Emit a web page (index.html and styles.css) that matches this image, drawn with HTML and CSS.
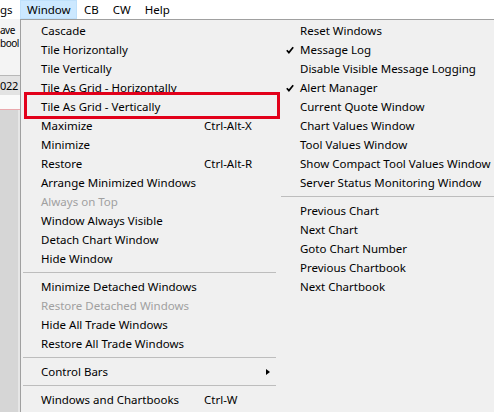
FILE: index.html
```html
<!DOCTYPE html>
<html>
<head>
<meta charset="utf-8">
<link rel="stylesheet" href="styles.css">
</head>
<body>
<div class="menubar">
  <span class="mb-item mb-clip">gs</span>
  <span class="mb-item active">Window</span>
  <span class="mb-item">CB</span>
  <span class="mb-item">CW</span>
  <span class="mb-item">Help</span>
</div>
<div class="workspace">
  <div class="strip">
    <div class="strip-tb">
      <div class="strip-line">ave</div>
      <div class="strip-line">bool</div>
    </div>
    <div class="strip-blank"></div>
    <div class="strip-date">022</div>
    <div class="strip-pink"></div>
    <div class="strip-gray"></div>
  </div>
  <div class="menu">
    <div class="col col-left">
      <div class="item"><span>Cascade</span></div>
      <div class="item"><span>Tile Horizontally</span></div>
      <div class="item"><span>Tile Vertically</span></div>
      <div class="item"><span>Tile As Grid - Horizontally</span></div>
      <div class="item"><span>Tile As Grid - Vertically</span></div>
      <div class="item"><span>Maximize</span><span>Ctrl-Alt-X</span></div>
      <div class="item"><span>Minimize</span></div>
      <div class="item"><span>Restore</span><span>Ctrl-Alt-R</span></div>
      <div class="item"><span>Arrange Minimized Windows</span></div>
      <div class="item disabled"><span>Always on Top</span></div>
      <div class="item"><span>Window Always Visible</span></div>
      <div class="item"><span>Detach Chart Window</span></div>
      <div class="item"><span>Hide Window</span></div>
      <div class="sep"></div>
      <div class="item"><span>Minimize Detached Windows</span></div>
      <div class="item disabled"><span>Restore Detached Windows</span></div>
      <div class="item"><span>Hide All Trade Windows</span></div>
      <div class="item"><span>Restore All Trade Windows</span></div>
      <div class="sep"></div>
      <div class="item sub"><span>Control Bars</span><span class="arrow"></span></div>
      <div class="sep"></div>
      <div class="item"><span>Windows and Chartbooks</span><span>Ctrl-W</span></div>
    </div>
    <div class="col col-right">
      <div class="ritem"><span class="chk"></span><span>Reset Windows</span></div>
      <div class="ritem"><span class="chk"><svg width="8" height="8" viewBox="0 0 8 8"><polyline points="0.8,4.2 2.9,6.6 7.2,1.2" fill="none" stroke="#000" stroke-width="1.7"/></svg></span><span>Message Log</span></div>
      <div class="ritem"><span class="chk"></span><span>Disable Visible Message Logging</span></div>
      <div class="ritem"><span class="chk"><svg width="8" height="8" viewBox="0 0 8 8"><polyline points="0.8,4.2 2.9,6.6 7.2,1.2" fill="none" stroke="#000" stroke-width="1.7"/></svg></span><span>Alert Manager</span></div>
      <div class="ritem"><span class="chk"></span><span>Current Quote Window</span></div>
      <div class="ritem"><span class="chk"></span><span>Chart Values Window</span></div>
      <div class="ritem"><span class="chk"></span><span>Tool Values Window</span></div>
      <div class="ritem"><span class="chk"></span><span>Show Compact Tool Values Window</span></div>
      <div class="ritem"><span class="chk"></span><span>Server Status Monitoring Window</span></div>
      <div class="sep sep-right"></div>
      <div class="ritem"><span class="chk"></span><span>Previous Chart</span></div>
      <div class="ritem"><span class="chk"></span><span>Next Chart</span></div>
      <div class="ritem"><span class="chk"></span><span>Goto Chart Number</span></div>
      <div class="ritem"><span class="chk"></span><span>Previous Chartbook</span></div>
      <div class="ritem"><span class="chk"></span><span>Next Chartbook</span></div>
    </div>
    <div class="annot"></div>
  </div>
</div>
</body>
</html>
```
FILE: styles.css
```css
* { box-sizing: border-box; }
html, body {
  margin: 0;
  padding: 0;
  width: 494px;
  height: 412px;
  overflow: hidden;
  background: #f0f0f0;
  font-family: "Noto Sans", "Open Sans", sans-serif;
  font-size: 11.5px;
  color: #000;
}
.menubar {
  height: 19px;
  background: #fff;
  display: flex;
  align-items: stretch;
  line-height: 19px;
}
.mb-item {
  padding: 0 7px;
  white-space: nowrap;
}
.mb-clip {
  width: 20px;
  padding: 0;
}
.mb-item.active {
  width: 57px;
  background: #cce8ff;
  box-shadow: inset 0 0 0 1px #bfe0fb;
}
.workspace {
  display: flex;
  height: 393px;
}
.strip {
  width: 20px;
  display: flex;
  flex-direction: column;
  overflow: hidden;
  white-space: nowrap;
}
.strip-tb {
  height: 37px;
  background: #f4f4f4;
  padding-top: 5px;
  font-size: 10px;
  letter-spacing: -0.5px;
}
.strip-line {
  height: 13px;
  line-height: 13px;
}
.strip-blank {
  height: 19px;
  background: #f4f4f4;
}
.strip-date {
  height: 20px;
  background: #e3e3e3;
  line-height: 20px;
  border-top: 1px solid #b8b8b8;
  font-size: 11px;
  letter-spacing: -0.3px;
}
.strip-pink {
  height: 15px;
  background: #fafafa;
  border-bottom: 1px solid #eaa9ad;
}
.strip-gray {
  flex: 1;
  background: #d6d6d6;
  border-right: 2px solid #e6e6e6;
}
.menu {
  position: relative;
  flex: 1;
  display: flex;
  background: #f0f0f0;
  border-left: 1px solid #a0a0a0;
  border-top: 1px solid #a0a0a0;
  padding-top: 1px;
}
.col-left {
  width: 259px;
  display: flex;
  flex-direction: column;
}
.col-right {
  flex: 1;
  display: flex;
  flex-direction: column;
}
.item {
  height: 19px;
  line-height: 19px;
  padding-left: 20px;
  display: grid;
  grid-template-columns: 163px auto;
  white-space: nowrap;
}
.item.disabled {
  color: #a0a0a0;
}
.item.sub {
  grid-template-columns: 225px auto;
  align-items: center;
}
.arrow {
  width: 0;
  height: 0;
  border-top: 3.5px solid transparent;
  border-bottom: 3.5px solid transparent;
  border-left: 4px solid #000;
}
.sep {
  height: 9px;
  display: flex;
  align-items: center;
  margin: 0 4px 0 2px;
}
.sep::before {
  content: "";
  flex: 1;
  height: 1px;
  background: #bdbdbd;
}
.sep-right {
  margin: 0 0 0 1px;
}
.ritem {
  height: 19px;
  line-height: 19px;
  display: flex;
  align-items: center;
  white-space: nowrap;
}
.chk {
  width: 20px;
  height: 19px;
  display: flex;
  align-items: center;
  padding-left: 6px;
}
.annot {
  position: absolute;
  left: 3px;
  top: 72px;
  width: 256px;
  height: 27px;
  border: 3px solid #e2001a;
}
```
